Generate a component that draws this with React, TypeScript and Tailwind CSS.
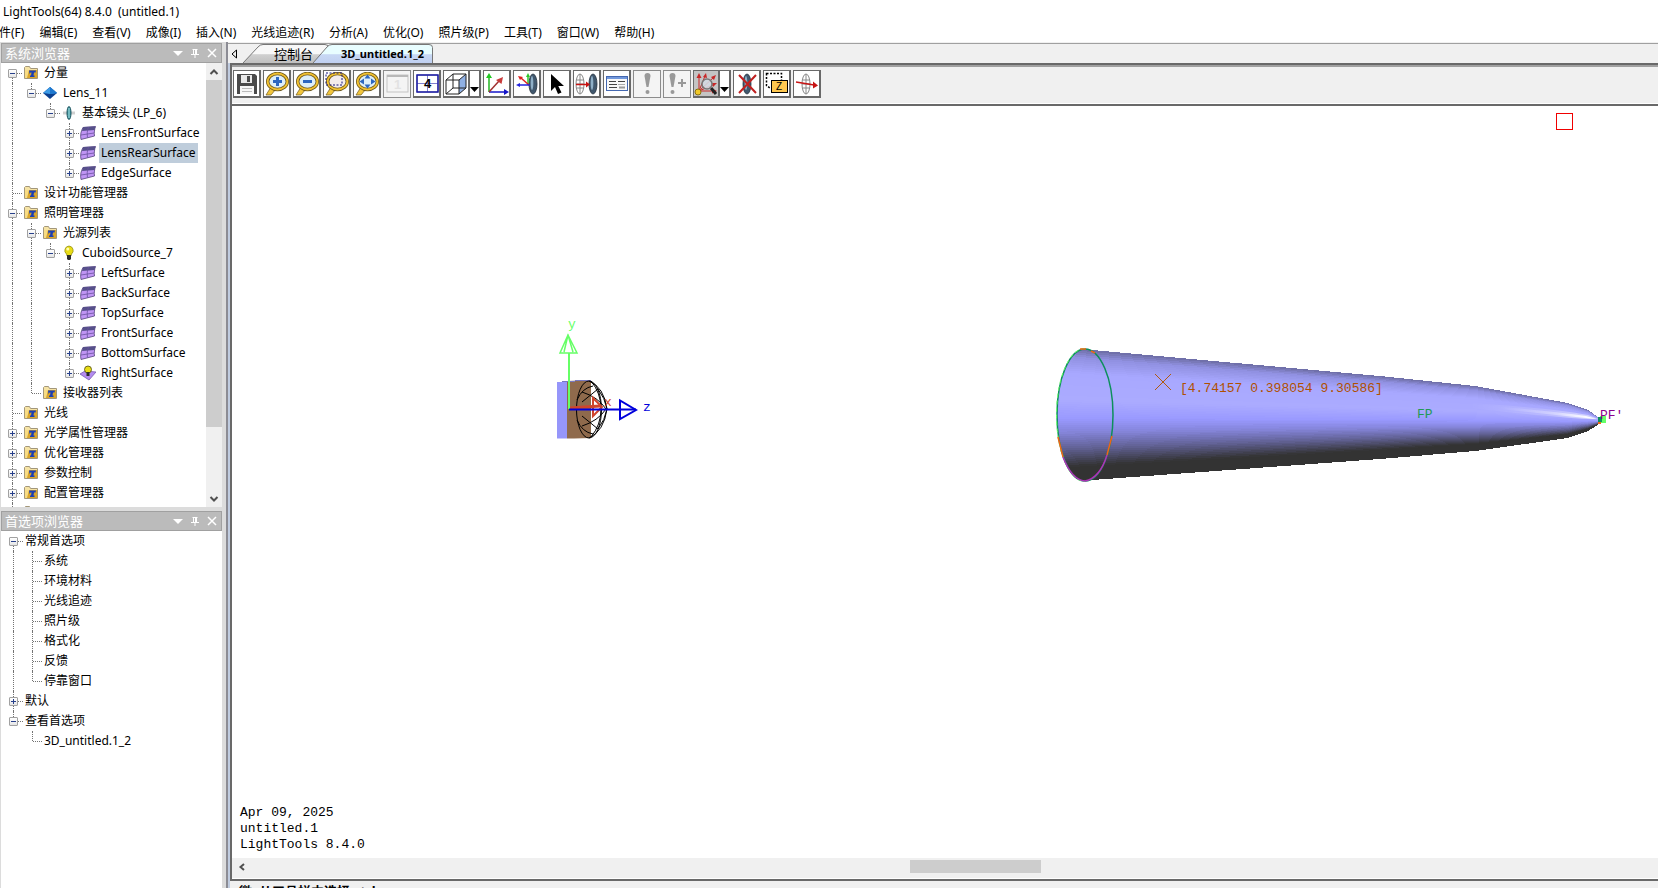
import type { ReactNode } from "react";
import clsx from "clsx";

type IconName = "folder" | "lens" | "element" | "surface" | "bulb" | "emitter";

interface TreeNode {
  label: string;
  icon?: IconName;
  open?: boolean;
  closed?: boolean;
  selected?: boolean;
  children?: TreeNode[];
}

const surface = (label: string, extra: Partial<TreeNode> = {}): TreeNode => ({
  label,
  icon: "surface",
  closed: true,
  ...extra,
});

const SYSTEM_TREE: TreeNode[] = [
  {
    label: "分量",
    icon: "folder",
    open: true,
    children: [
      {
        label: "Lens_11",
        icon: "lens",
        open: true,
        children: [
          {
            label: "基本镜头 (LP_6)",
            icon: "element",
            open: true,
            children: [
              surface("LensFrontSurface"),
              surface("LensRearSurface", { selected: true }),
              surface("EdgeSurface"),
            ],
          },
        ],
      },
    ],
  },
  { label: "设计功能管理器", icon: "folder" },
  {
    label: "照明管理器",
    icon: "folder",
    open: true,
    children: [
      {
        label: "光源列表",
        icon: "folder",
        open: true,
        children: [
          {
            label: "CuboidSource_7",
            icon: "bulb",
            open: true,
            children: [
              surface("LeftSurface"),
              surface("BackSurface"),
              surface("TopSurface"),
              surface("FrontSurface"),
              surface("BottomSurface"),
              surface("RightSurface", { icon: "emitter" }),
            ],
          },
        ],
      },
      { label: "接收器列表", icon: "folder" },
    ],
  },
  { label: "光线", icon: "folder" },
  { label: "光学属性管理器", icon: "folder", closed: true },
  { label: "优化管理器", icon: "folder", closed: true },
  { label: "参数控制", icon: "folder", closed: true },
  { label: "配置管理器", icon: "folder", closed: true },
  { label: "", icon: "folder" },
];

const PREFERENCE_TREE: TreeNode[] = [
  {
    label: "常规首选项",
    open: true,
    children: ["系统", "环境材料", "光线追迹", "照片级", "格式化", "反馈", "停靠窗口"].map((label) => ({ label })),
  },
  { label: "默认", closed: true },
  { label: "查看首选项", open: true, children: [{ label: "3D_untitled.1_2" }] },
];

const MENUS = [
  "文件(F)",
  "编辑(E)",
  "查看(V)",
  "成像(I)",
  "插入(N)",
  "光线追迹(R)",
  "分析(A)",
  "优化(O)",
  "照片级(P)",
  "工具(T)",
  "窗口(W)",
  "帮助(H)",
];

function TreeIcon({ name }: { name: IconName }) {
  return (
    <svg viewBox="0 0 16 16" className="size-4 shrink-0">
      {name === "folder" && (
        <>
          <path d="M1.500 13.500v-11l1-1h4l1 2h7v10z" fill="#f6e3a4" stroke="#a3977a" />
          <path d="M2 5h12v8H2z" fill="#d9a52c" />
          <path d="M2 5h4l-2 8H2z" fill="#f8dc84" />
          <path d="M6 5.500h7l-.500 2H11l-.500 3h1v1.500H7v-1.500h1l.500-3H7.500L6.500 9z" fill="#1c3fb4" />
        </>
      )}
      {name === "lens" && (
        <>
          <path d="M1 8l7-6 7 6-7 6z" fill="#0b3f8f" />
          <path d="M1 8l7-6 7 6-7 1z" fill="#3d9be6" />
          <path d="M8 2l7 6-7 1z" fill="#1f78cf" />
        </>
      )}
      {name === "element" && (
        <>
          <path d="M2 8h12" stroke="#d0d0d0" strokeWidth="3" />
          <ellipse cx="8" cy="8" rx="2" ry="6.500" fill="#3f97a0" stroke="#1f5560" />
          <path d="M8 3v10" stroke="#a8dfe2" />
        </>
      )}
      {name === "surface" && (
        <>
          <path d="M3 2.500L15.500 1.500C14.500 4 14 8 14.500 11L1 14.500C0 10 1 6 3 2.500z" fill="#bf94f4" stroke="#54427c" strokeWidth=".8" />
          <path d="M3 2L15.500 1.500 14.500 5 2 6z" fill="#56508a" />
          <path d="M8.500 2C7 6 7 9 7.500 12.500M1 10l13-2" stroke="#6a52a0" strokeWidth=".8" fill="none" />
        </>
      )}
      {name === "bulb" && (
        <>
          <path d="M8 1a4.500 4.500 0 0 1 2.500 8l-.500 2H6l-.500-2A4.500 4.500 0 0 1 8 1z" fill="#e8dc16" stroke="#8a8410" strokeWidth=".7" />
          <circle cx="6.800" cy="4" r="1.500" fill="#fffcb0" />
          <path d="M6 10h4v4l-1 1H7l-1-1z" fill="#2c2c2c" />
        </>
      )}
      {name === "emitter" && (
        <>
          <path d="M0 9l5-3 11 1-7 8z" fill="#b48cf0" stroke="#7a5ab0" strokeWidth=".8" />
          <circle cx="8" cy="4.500" r="3.500" fill="#e8dc16" stroke="#4c4a10" strokeWidth=".8" />
          <path d="M6.500 7h3v4h-3z" fill="#2c2c2c" />
        </>
      )}
    </svg>
  );
}

interface BranchProps {
  nodes: TreeNode[];
  // one flag per ancestor column: true while that column still has a sibling below
  guides?: boolean[];
}

function Branch({ nodes, guides = [] }: BranchProps) {
  return (
    <ul>
      {nodes.map((node, i) => {
        const last = i === nodes.length - 1;
        const first = i === 0 && guides.length === 0;
        const box = node.open || node.closed;
        return (
          <li key={node.label}>
            <div className="flex h-5 items-center whitespace-nowrap">
              {guides.map((on, g) => (
                <span key={g} className="flex h-5 w-[19px] shrink-0 justify-center">
                  {on && <span className="border-l border-dotted border-neutral-500" />}
                </span>
              ))}
              <span className="relative flex h-5 w-[19px] shrink-0 items-center justify-center">
                <span
                  className={clsx(
                    "absolute left-[9px] border-l border-dotted border-neutral-500",
                    first ? "top-[10px]" : "top-0",
                    last ? "bottom-[10px]" : "bottom-0",
                  )}
                />
                <span className="absolute top-[10px] right-0 left-[10px] border-t border-dotted border-neutral-500" />
                {box && (
                  <button
                    aria-label={`${node.open ? "-" : "+"} ${node.label}`}
                    className="relative size-[9px] rounded-[1px] border border-neutral-400 bg-gradient-to-b from-white to-neutral-200"
                  >
                    <span className="absolute top-[3px] left-[1px] h-px w-[5px] bg-[#27408b]" />
                    {node.closed && <span className="absolute top-[1px] left-[3px] h-[5px] w-px bg-[#27408b]" />}
                  </button>
                )}
              </span>
              {node.icon && (
                <span className="flex w-5 shrink-0 pl-px">
                  <TreeIcon name={node.icon} />
                </span>
              )}
              <span className={clsx("h-5 px-[2px] leading-5", node.selected && "bg-[#bfcddb]")}>{node.label}</span>
            </div>
            {node.children && <Branch nodes={node.children} guides={[...guides, !last]} />}
          </li>
        );
      })}
    </ul>
  );
}

function PanelHeader({ title }: { title: string }) {
  return (
    <header className="flex h-5 shrink-0 items-center justify-between border border-[#a0a0a0] bg-[#bbbbbb] pr-[3px] pl-[3px] text-[13px] leading-4 text-white">
      <h2>{title}</h2>
      <div className="flex gap-[5px]">
        <button aria-label="菜单">
          <svg viewBox="0 0 12 12" className="size-3">
            <path d="M1 4h10L6 9z" fill="#fff" />
          </svg>
        </button>
        <button aria-label="固定">
          <svg viewBox="0 0 12 12" className="size-3" fill="none" stroke="#fff">
            <path d="M3.500 2.500h5M4.500 2.500v5M7.500 2.500v5M2 7.500h8M6 8v3M6.500 3v4" />
          </svg>
        </button>
        <button aria-label="关闭">
          <svg viewBox="0 0 12 12" className="size-3">
            <path d="M2 2l8 8M10 2l-8 8" stroke="#fff" strokeWidth="1.500" />
          </svg>
        </button>
      </div>
    </header>
  );
}

function Sidebar() {
  return (
    <aside className="flex w-[226px] shrink-0 flex-col bg-[#dcdcdc] pt-px pr-1 pl-px">
      <PanelHeader title="系统浏览器" />
      <div className="flex h-[444px] shrink-0 bg-white">
        <div className="min-w-0 flex-1 overflow-hidden pl-[2px]">
          <Branch nodes={SYSTEM_TREE} />
        </div>
        <div className="flex w-4 flex-col bg-[#f0f0f0]">
          <button aria-label="向上" className="flex h-[17px] items-center justify-center">
            <svg viewBox="0 0 10 10" className="size-[10px]">
              <path d="M1.500 7L5 3.500 8.500 7" fill="none" stroke="#505050" strokeWidth="2" />
            </svg>
          </button>
          <div className="h-[347px] bg-[#cdcdcd]" />
          <button aria-label="向下" className="mt-auto flex h-[17px] items-center justify-center">
            <svg viewBox="0 0 10 10" className="size-[10px]">
              <path d="M1.500 3L5 6.500 8.500 3" fill="none" stroke="#505050" strokeWidth="2" />
            </svg>
          </button>
        </div>
      </div>
      <div className="h-1 shrink-0" />
      <PanelHeader title="首选项浏览器" />
      <div className="min-h-0 flex-1 overflow-hidden bg-white pl-[3px]">
        <Branch nodes={PREFERENCE_TREE} />
      </div>
    </aside>
  );
}

function Magnifier({ children, clear }: { children?: ReactNode; clear?: boolean }) {
  return (
    <>
      <path d="M6 15l-5 8h5l5-6z" fill="#f2c53c" stroke="#6f5a1e" strokeWidth=".7" />
      <ellipse cx="12.500" cy="9.500" rx="9.800" ry="8" fill={clear ? "#f3ecec" : "#ddeef8"} stroke="#6f5a1e" strokeWidth="3.400" />
      <ellipse cx="12.500" cy="9.500" rx="9.800" ry="8" fill="none" stroke="#f0c030" strokeWidth="1.800" />
      {children}
    </>
  );
}

function LensShape({ x, rx = 4 }: { x: number; rx?: number }) {
  return (
    <>
      <ellipse cx={x} cy="12" rx={rx} ry="10" fill="#41586e" stroke="#222f3c" strokeWidth=".8" />
      <ellipse cx={x - 1} cy="11" rx={rx / 3} ry="7" fill="#8fb0c8" />
    </>
  );
}

function WireLens({ x }: { x: number }) {
  return (
    <g fill="none" stroke="#888">
      <ellipse cx={x} cy="12" rx="4" ry="10" />
      <path d={`M${x} 2v20M${x - 4} 8h8M${x - 4} 12h8M${x - 4} 16h8`} />
    </g>
  );
}

interface Tool {
  label: string;
  art: ReactNode;
  disabled?: boolean;
  pressed?: boolean;
  menu?: boolean;
}

const TOOLS: Tool[] = [
  {
    label: "保存",
    art: (
      <>
        <path d="M2 2h18l2 2v18H2z" fill="#4a4a4a" />
        <path d="M6 3h11v8H6z" fill="#e8e8e8" />
        <path d="M12 4h3v6h-3z" fill="#4a4a4a" />
        <path d="M5 14h14v8H5z" fill="#f6f6f6" />
        <path d="M7 16.500h10M7 19.500h10" stroke="#bbb" />
      </>
    ),
  },
  {
    label: "放大",
    art: (
      <Magnifier>
        <path d="M12.500 5v9M8 9.500h9" stroke="#2c66c0" strokeWidth="3" />
      </Magnifier>
    ),
  },
  {
    label: "缩小",
    art: (
      <Magnifier>
        <path d="M8 9.500h9" stroke="#2c66c0" strokeWidth="3" />
      </Magnifier>
    ),
  },
  {
    label: "窗口缩放",
    art: (
      <Magnifier clear>
        <path d="M1 1h16v12H1z" fill="none" stroke="#15157c" strokeDasharray="2 1.500" />
      </Magnifier>
    ),
  },
  {
    label: "全部显示",
    art: (
      <Magnifier>
        <path d="M12.500 2.500l3 4h-6zM12.500 16.500l3-4h-6zM4.500 9.500l4.500-3v6zM20.500 9.500l-4.500-3v6z" fill="#2c66c0" />
      </Magnifier>
    ),
  },
  {
    label: "单视图",
    disabled: true,
    art: (
      <>
        <rect x="2" y="3" width="21" height="17" fill="none" stroke="#c4c4c4" />
        <path d="M2 4h21" stroke="#b8b8b8" strokeWidth="2" />
        <text x="9" y="17" fontSize="13" fill="#e2e2e2" fontFamily="Liberation Sans" fontWeight="bold">1</text>
      </>
    ),
  },
  {
    label: "四视图",
    art: (
      <>
        <path d="M2 3h21v17H2zM2 11.500h21M12.500 3v17" fill="none" stroke="#8080d0" />
        <rect x="2" y="3" width="21" height="17" fill="none" stroke="#1c1ca0" strokeWidth="1.500" />
        <text x="9" y="16" fontSize="13" fill="#000" fontFamily="Liberation Sans" fontWeight="bold">4</text>
      </>
    ),
  },
  {
    label: "视图方向",
    menu: true,
    art: (
      <>
        <path d="M15 8l7-6v14l-7 6z" fill="#8fb0e4" />
        <path d="M2 8h13v14H2zM2 8l7-6h13v14l-7 6M15 8l7-6M9 2v14l-7 6M9 16h13" fill="none" stroke="#222" />
      </>
    ),
  },
  {
    label: "坐标轴",
    art: (
      <>
        <path d="M4 20V5" stroke="#22b422" strokeWidth="1.500" />
        <path d="M4 1l3 5H1z" fill="#22c822" />
        <path d="M4 20h15" stroke="#1414c8" strokeWidth="1.500" />
        <path d="M24 20l-5-3v6z" fill="#1414c8" />
        <path d="M4 20L14 9" stroke="#a03030" strokeWidth="1.500" />
        <path d="M18 5l-1.500 7-5.500-4z" fill="#c83c3c" />
      </>
    ),
  },
  {
    label: "局部坐标",
    art: (
      <>
        <LensShape x={18} />
        <path d="M13 13V4" stroke="#2cc82c" strokeWidth="1.500" />
        <path d="M13 1l2 4h-4z" fill="#2cc82c" />
        <path d="M14 13L6 6" stroke="#d22" strokeWidth="1.500" />
        <path d="M3 4l5 1-3 3z" fill="#d22" />
        <path d="M15 13H4" stroke="#22d" strokeWidth="1.500" />
        <path d="M1 13l4-2v4z" fill="#22d" />
      </>
    ),
  },
  {
    label: "选择",
    art: <path d="M6 2v17l4-4 3 7 3.500-1.500-3.200-6.500H19z" fill="#000" />,
  },
  {
    label: "移动",
    art: (
      <>
        <WireLens x={5} />
        <LensShape x={18} />
        <path d="M1 12.500h11" stroke="#c81414" strokeWidth="1.500" />
        <path d="M15 12.500l-4-3v6z" fill="#c81414" />
      </>
    ),
  },
  {
    label: "属性",
    art: (
      <>
        <rect x="1.500" y="4.500" width="21" height="14" fill="#f8f8f8" stroke="#4468b0" />
        <path d="M2 6h20" stroke="#7298dc" strokeWidth="2" />
        <path d="M4 9.500h7M4 12.500h8M4 15.500h8M13 9.500h7" stroke="#444" />
        <path d="M13 12.500h7" stroke="#aaa" />
        <path d="M14 15.500h6" stroke="#999" strokeWidth="2" />
      </>
    ),
  },
  {
    label: "光线追迹",
    disabled: true,
    art: (
      <>
        <path d="M9.500 4a3 3 0 0 1 6 0l-2 11h-2z" fill="#999" />
        <circle cx="12.500" cy="20" r="2" fill="#999" />
      </>
    ),
  },
  {
    label: "增量追迹",
    disabled: true,
    art: (
      <>
        <path d="M4.500 4a3 3 0 0 1 6 0l-2 11h-2z" fill="#999" />
        <circle cx="7.500" cy="20" r="2" fill="#999" />
        <path d="M17 7v8M13 11h8" stroke="#999" strokeWidth="2" />
      </>
    ),
  },
  {
    label: "光线预览",
    pressed: true,
    menu: true,
    art: (
      <>
        <path d="M5 19V4M5 19l6-15M5 19L20 5M5 19l16-7M5 19h14" stroke="#c82828" />
        <path d="M5 1l2.500 5h-5zM12 1l1 5-4-1zM22 3l-2 5-3-3zM23 11l-4 4-1-4zM23 19l-5-2.500v5z" fill="#c82828" />
        <circle cx="4" cy="20" r="3" fill="#f0c828" stroke="#8a7010" />
        <path d="M17 16l5 6" stroke="#222" strokeWidth="3" />
        <circle cx="13" cy="12" r="5" fill="#d4dce4" fillOpacity=".85" stroke="#777" strokeWidth="1.500" />
      </>
    ),
  },
  {
    label: "删除光线",
    art: (
      <>
        <LensShape x={12} />
        <path d="M4 3l17 18M21 3L4 21" stroke="#c02020" strokeWidth="2" />
      </>
    ),
  },
  {
    label: "Z 向选择",
    art: (
      <>
        <path d="M1.500 1.500h15v15h-11l-4-3z" fill="none" stroke="#000" strokeWidth="1.500" strokeDasharray="2 1.500" />
        <rect x="6.500" y="8.500" width="16" height="12" fill="#ffc850" stroke="#000" />
        <text x="11" y="18" fontSize="10" fill="#000" fontFamily="Liberation Sans">Z</text>
      </>
    ),
  },
  {
    label: "单光线",
    art: (
      <>
        <WireLens x={11} />
        <path d="M1 10l18 3" stroke="#c81414" strokeWidth="1.500" />
        <path d="M23 13.500l-5-4v7z" fill="#c81414" />
      </>
    ),
  },
];

function ToolButton({ label, art, disabled, pressed, menu }: Tool) {
  return (
    <div className="flex">
      <button
        aria-label={label}
        disabled={disabled}
        className={clsx(
          "flex h-7 items-center justify-center border",
          menu ? "w-[27px]" : "w-7",
          disabled ? "border-[#8c8c8c] bg-[#f4f4f4]" : "border-r-2 border-b-2 border-[#696969]",
          pressed ? "bg-[#c4c4c4]" : !disabled && "bg-white",
        )}
      >
        <svg viewBox="0 0 24 24" className="size-6">
          {art}
        </svg>
      </button>
      {menu && (
        <button
          aria-label={`${label}菜单`}
          className="flex h-7 w-[11px] items-end border-t border-r-2 border-b-2 border-[#696969] bg-white pb-1"
        >
          <svg viewBox="0 0 9 6" className="h-[6px] w-[9px]">
            <path d="M0 1h9L4.500 6z" fill="#000" />
          </svg>
        </button>
      )}
    </div>
  );
}

function TabStrip() {
  return (
    <nav className="flex h-5 shrink-0 items-end border-t border-[#a0a0a0] bg-[#f0f0f0] pl-[3px]">
      <button aria-label="上一个" className="flex h-[19px] w-3 items-center">
        <svg viewBox="0 0 6 10" className="h-[10px] w-[6px]">
          <path d="M5.500 1v8L1 5z" fill="none" stroke="#000" />
        </svg>
      </button>
      <button className="relative h-[19px] w-[90px] pl-[31px] text-left text-[13px] leading-[18px] whitespace-nowrap">
        <svg viewBox="0 0 90 19" className="absolute inset-0 size-full">
          <defs>
            <linearGradient id="tab-idle" x2="0" y2="1">
              <stop offset=".5" stopColor="#f8f8f8" />
              <stop offset=".55" stopColor="#d0d0d0" />
              <stop offset="1" stopColor="#c0c0c0" />
            </linearGradient>
          </defs>
          <path d="M0 19L15 3q2-2.500 5-2.500h62q4 0 4 4V19" fill="url(#tab-idle)" stroke="#777" />
        </svg>
        <span className="relative">控制台</span>
      </button>
      <button className="relative -ml-[20px] h-[19px] w-[120px] pl-[28px] text-left text-[11px] leading-[18px] font-bold whitespace-nowrap">
        <svg viewBox="0 0 120 19" className="absolute inset-0 size-full">
          <defs>
            <linearGradient id="tab-active" x2="0" y2="1">
              <stop offset=".5" stopColor="#e8fdff" />
              <stop offset=".55" stopColor="#c8d8f4" />
              <stop offset="1" stopColor="#c0d0f0" />
            </linearGradient>
          </defs>
          <path d="M0 19L14 3q2-2.500 5-2.500h97q3.500 0 3.500 3V19" fill="url(#tab-active)" stroke="#777" />
        </svg>
        <span className="relative">3D_untitled.1_2</span>
      </button>
    </nav>
  );
}

type Point = [number, number];

// silhouette of the tapered body, front rim to tip
const TOP: Point[] = [[15, 16], [52, 20], [340, 46], [435, 56], [528, 73], [548, 80], [558, 87], [560, 91]];
const BOTTOM: Point[] = [[15, 153], [52, 150], [340, 129], [435, 121], [528, 108], [548, 101], [558, 95], [560, 91]];
const SHADES: [number, number[]][] = [
  [0, [112, 112, 170]],
  [0.06, [145, 145, 225]],
  [0.18, [168, 168, 255]],
  [0.38, [171, 171, 255]],
  [0.52, [153, 153, 255]],
  [0.62, [133, 133, 218]],
  [0.74, [98, 98, 150]],
  [0.88, [51, 51, 51]],
  [1, [51, 51, 51]],
];
const BANDS = 64;

function shadeAt(t: number) {
  const i = Math.max(1, SHADES.findIndex(([stop]) => stop >= t));
  const [a, from] = SHADES[i - 1];
  const [b, to] = SHADES[i];
  const k = (t - a) / (b - a);
  return `rgb(${from.map((c, n) => Math.round(c + (to[n] - c) * k)).join(",")})`;
}

function bandPath(t: number) {
  const upper = TOP.map(([x, y], i) => `${x},${y + (BOTTOM[i][1] - y) * t}`);
  const lower = BOTTOM.map(([x, y]) => `${x},${y}`).reverse();
  return [...upper, ...lower].join(" ");
}

function TaperedBody() {
  return (
    <g transform="translate(808 224)">
      <defs>
        <clipPath id="body">
          <path d="M45 19H600V151H45A28 66 0 0 1 45 19z" />
        </clipPath>
        <linearGradient id="glint">
          <stop offset="0" stopColor="#fff" stopOpacity="0" />
          <stop offset=".6" stopColor="#fff" stopOpacity=".35" />
          <stop offset=".95" stopColor="#fff" />
        </linearGradient>
      </defs>
      <g clipPath="url(#body)" shapeRendering="crispEdges">
        {Array.from({ length: BANDS }, (_, i) => (
          <polygon key={i} points={bandPath(i / BANDS)} fill={shadeAt(i / BANDS)} />
        ))}
      </g>
      <path d="M430 73Q510 78 548 85L558 89L548 89Q510 87 430 78z" fill="url(#glint)" opacity=".5" />
      <path d="M460 77Q515 81 546 86L556 89L546 88Q515 85 460 79z" fill="url(#glint)" />
      <g fill="none" strokeWidth="1.500">
        <ellipse cx="45" cy="85" rx="28" ry="66" stroke="#0d8f5c" />
        <path d="M45 18.500A28.500 66.500 0 0 0 45 151.500" stroke="#66ff66" strokeWidth="1" strokeDasharray="4 3" />
        <path d="M72 106L67 125M18 107L23 127M40 19h6M51 21l4 2" stroke="#f06418" />
        <path d="M67 125Q60 148 45 151Q32 150 23 127" stroke="#b030b8" />
      </g>
      <path d="M115 44l16 16M131 44l-16 16" stroke="#b05a10" />
      <text x="140" y="62" fill="#b05000">[4.74157 0.398054 9.30586]</text>
      <text x="377" y="88" fill="#229955">FP</text>
      <rect x="560" y="86" width="6" height="7" fill="#66ff66" />
      <path d="M558 87h4v5h-4z" fill="#0d8f5c" />
      <path d="M558 92h3v2h-3z" fill="#f06418" />
      <text x="560" y="89" fill="#8c008c">PF'</text>
    </g>
  );
}

function SourceModel() {
  return (
    <g transform="translate(298 204)" fill="none">
      <path d="M27 72h10v56.500H27z" fill="#9696fa" />
      <path d="M37 71l24-1v58l-17 .500h-7z" fill="#8f6a4c" />
      <path d="M32 71.500h13M45 70.500h16" stroke="#7878c0" />
      <g stroke="#000">
        <ellipse cx="59" cy="99.500" rx="12.500" ry="28.500" />
        <path d="M59 71q15 6 18 28q-3 22-18 29M47 90q5-12 16-14M47 110q5 12 16 14M52 82q16 5 24 17q-8 12-24 17M61 71q10 12 10 28t-10 28M52 92l16-13q7 9 9 20q-2 11-9 20l-16-13" />
      </g>
      <path d="M40 98l30-2" stroke="#d0452c" strokeWidth="3" />
      <path d="M63 88v18l9-9z" stroke="#d0452c" strokeWidth="2" />
      <path d="M39 99V43" stroke="#66ff66" strokeWidth="2" />
      <path d="M38 25l9 18H30zM38 25l-4 17M38 25l5 17" stroke="#66ff66" strokeWidth="1.500" />
      <path d="M39 99.500h67" stroke="#0000dc" strokeWidth="2" />
      <path d="M90 90.500v18.500l16-9z" stroke="#0000dc" strokeWidth="2" />
      <text x="38" y="18" fill="#66ff66">y</text>
      <text x="74" y="96" fill="#d0452c">x</text>
      <text x="113" y="101" fill="#0000dc">z</text>
    </g>
  );
}

function Viewport() {
  return (
    <section className="relative min-h-0 flex-1 overflow-hidden bg-white">
      <svg className="absolute inset-0 size-full font-['Liberation_Mono',monospace] text-[13px]">
        <rect x="1324.500" y="7.500" width="16" height="16" fill="none" stroke="#f00000" />
        <SourceModel />
        <TaperedBody />
      </svg>
      <div className="absolute bottom-[5px] left-2 font-['Liberation_Mono',monospace] text-[13px] leading-4">
        <p>Apr 09, 2025</p>
        <p>untitled.1</p>
        <p>LightTools 8.4.0</p>
      </div>
    </section>
  );
}

export default function App() {
  return (
    <div className="flex h-screen flex-col overflow-hidden bg-white font-['Noto_Sans','Noto_Sans_CJK_SC',sans-serif] text-[12px] text-black">
      <h1 className="h-[22px] shrink-0 pl-[3px] text-[12px] leading-6 whitespace-pre">LightTools(64) 8.4.0  (untitled.1)</h1>
      <nav className="-ml-[13px] flex h-5 shrink-0 gap-[15px] leading-[22px] whitespace-nowrap">
        {MENUS.map((menu) => (
          <button key={menu}>{menu}</button>
        ))}
      </nav>
      <div className="flex min-h-0 flex-1">
        <Sidebar />
        <main className="flex min-w-0 flex-1 flex-col border-l-2 border-[#8c8c94] bg-[#f0f0f0] pt-px">
          <TabStrip />
          <div className="flex min-h-0 flex-1 flex-col border-l-2 border-[#c0cce0]">
            <div className="flex min-h-0 flex-1 flex-col border-t-2 border-l-2 border-[#696969]">
              <div className="h-[2px] shrink-0 bg-[#a0a0a0]" />
              <div className="flex h-[37px] shrink-0 items-start gap-[2px] border-b border-white pt-[3px] pl-px">
                {TOOLS.map((tool) => (
                  <ToolButton key={tool.label} {...tool} />
                ))}
              </div>
              <div className="h-[2px] shrink-0 bg-[#696969]" />
              <Viewport />
              <div className="flex h-[21px] shrink-0 items-start border-b border-white pt-[2px] pl-[6px]">
                <button aria-label="向左" className="flex h-[13px] items-center">
                  <svg viewBox="0 0 8 8" className="size-2">
                    <path d="M6 1L2.500 4 6 7" fill="none" stroke="#505050" strokeWidth="2" />
                  </svg>
                </button>
                <div className="flex-1">
                  <div className="ml-[47%] h-[13px] w-[131px] bg-[#cdcdcd]" />
                </div>
              </div>
            </div>
            <footer className="h-[9px] shrink-0 overflow-hidden border-t-2 border-[#696969] pl-[9px] text-[13px] leading-5 font-bold">
              微, 从工具栏中选择 ctrl
            </footer>
          </div>
        </main>
      </div>
    </div>
  );
}
